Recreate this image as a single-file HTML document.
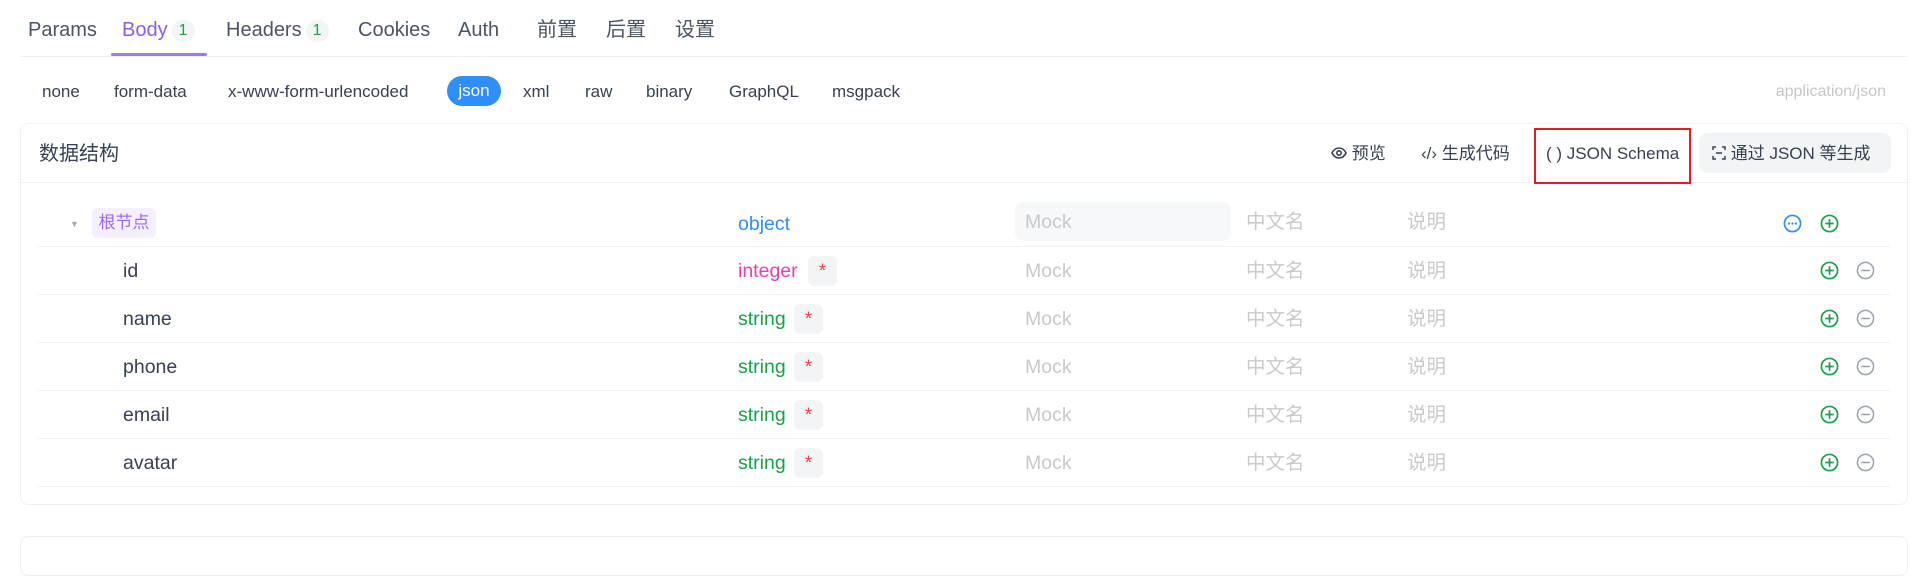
<!DOCTYPE html>
<html><head><meta charset="utf-8"><style>
*{box-sizing:border-box;margin:0;padding:0}
body{width:1930px;height:552px;background:#fff;font-family:"Liberation Sans","Noto Sans CJK SC",sans-serif;color:#4b5563;position:relative;overflow:hidden}
.a{position:absolute;white-space:nowrap;line-height:24px}
.tab{font-size:20px;top:18px;color:#4b5563}
.badge{display:inline-block;background:#f1f5f3;color:#16a34a;border-radius:11px;font-size:16px;padding:0 7px;margin-left:4px;line-height:22px;vertical-align:1px}
.bt{font-size:17px;top:80px;color:#374151}
.row{font-size:19.5px}
.mock{color:#c7c9cc}
.sep{position:absolute;left:37px;width:1853px;height:1px;background:#f0f1f3}
.star{display:inline-block;background:#f3f4f6;color:#ef4444;border-radius:6px;width:29px;text-align:center;height:30px;line-height:32px;vertical-align:middle;font-size:19px}
.hb{font-size:17px;top:142px;color:#374151}
</style></head><body>
<div class="a tab" style="left:28px">Params</div>
<div class="a tab" style="left:122px;color:#8b5cf6">Body<span class="badge">1</span></div>
<div class="a tab" style="left:226px">Headers<span class="badge">1</span></div>
<div class="a tab" style="left:358px">Cookies</div>
<div class="a tab" style="left:458px">Auth</div>
<div class="a tab" style="left:537px">前置</div>
<div class="a tab" style="left:606px">后置</div>
<div class="a tab" style="left:675px">设置</div>
<div class="a" style="left:20px;top:56px;width:1888px;height:1px;background:#eeeff1"></div>
<div class="a" style="left:111px;top:53px;width:96px;height:3px;background:#9b7be8;border-radius:2px"></div>

<div class="a bt" style="left:42px">none</div>
<div class="a bt" style="left:114px">form-data</div>
<div class="a bt" style="left:228px">x-www-form-urlencoded</div>
<div class="a" style="left:447px;top:76px;width:54px;height:30px;border-radius:15px;background:#2f8ef8;color:#fff;font-size:17px;text-align:center;line-height:30px">json</div>
<div class="a bt" style="left:523px">xml</div>
<div class="a bt" style="left:585px">raw</div>
<div class="a bt" style="left:646px">binary</div>
<div class="a bt" style="left:729px">GraphQL</div>
<div class="a bt" style="left:832px">msgpack</div>
<div class="a" style="right:44px;top:80px;font-size:16px;color:#c4c6ca">application/json</div>

<div class="a" style="left:20px;top:123px;width:1888px;height:382px;border:1px solid #eef0f2;border-radius:8px"></div>
<div class="a" style="left:39px;top:142px;font-size:20px;color:#374151">数据结构</div>
<div class="a" style="left:21px;top:182px;width:1886px;height:1px;background:#eef0f2"></div>
<div class="a hb" style="left:1331px"><svg width="16" height="12" viewBox="0 0 16 12" style="vertical-align:0"><path d="M1 6C3 2 6 1 8 1s5 1 7 5c-2 4-5 5-7 5S3 10 1 6z" fill="none" stroke="#374151" stroke-width="1.6"/><circle cx="8" cy="6" r="2.2" fill="none" stroke="#374151" stroke-width="1.6"/></svg> 预览</div>
<div class="a hb" style="left:1421px">‹/› 生成代码</div>
<div class="a hb" style="left:1546px">( ) JSON Schema</div>
<div class="a" style="left:1534px;top:128px;width:157px;height:56px;border:2px solid #e51c23"></div>
<div class="a" style="left:1699px;top:133px;width:192px;height:40px;background:#f3f4f5;border-radius:8px"></div>
<div class="a hb" style="left:1712px"><svg width="14" height="14" viewBox="0 0 14 14" style="vertical-align:-1px"><path d="M1 4V1h3M10 1h3v3M13 10v3h-3M4 13H1v-3M4 7h6" fill="none" stroke="#374151" stroke-width="1.5"/></svg> 通过 JSON 等生成</div>

<div class="a" style="left:70px;top:212px;font-size:9px;color:#aaa">▼</div>
<div class="a" style="left:92px;top:208px;width:64px;height:30px;border-radius:6px;background:#f5f0ff;color:#9b6cf0;font-size:17px;text-align:center;line-height:30px">根节点</div>
<div class="a row" style="left:738px;top:212px;color:#2f8ef8">object</div>
<div class="a" style="left:1015px;top:202px;width:216px;height:39px;background:#f7f8fa;border-radius:8px"></div>
<div class="a row mock" style="left:1025px;top:210px">Mock</div>
<div class="a row mock" style="left:1246px;top:210px">中文名</div>
<div class="a row mock" style="left:1407px;top:210px">说明</div>
<svg class="a" style="left:1783px;top:214px" width="19" height="19" viewBox="0 0 20 20"><circle cx="10" cy="10" r="8.5" fill="none" stroke="#2f8ef8" stroke-width="1.8"/><circle cx="6.5" cy="10" r="1.2" fill="#2f8ef8"/><circle cx="10" cy="10" r="1.2" fill="#2f8ef8"/><circle cx="13.5" cy="10" r="1.2" fill="#2f8ef8"/></svg>
<svg class="a" style="left:1820px;top:214px" width="19" height="19" viewBox="0 0 20 20"><circle cx="10" cy="10" r="8.5" fill="none" stroke="#16a34a" stroke-width="1.8"/><path d="M10 5.5v9M5.5 10h9" stroke="#16a34a" stroke-width="1.8"/></svg>
<div class="sep" style="top:246px"></div>

<div id="rows"></div>
<script>
var d=[["id","integer","#e83fb0",808],["name","string","#16a34a",794],["phone","string","#16a34a",794],["email","string","#16a34a",794],["avatar","string","#16a34a",794]];
var h="";
d.forEach(function(r,i){var t=259+i*48;
h+='<div class="a row" style="left:123px;top:'+t+'px;color:#374151">'+r[0]+'</div>';
h+='<div class="a row" style="left:738px;top:'+t+'px;color:'+r[2]+'">'+r[1]+'</div>';
h+='<div class="a" style="left:'+r[3]+'px;top:'+(t-3)+'px"><span class="star">*</span></div>';
h+='<div class="a row mock" style="left:1025px;top:'+t+'px">Mock</div>';
h+='<div class="a row mock" style="left:1246px;top:'+t+'px">中文名</div>';
h+='<div class="a row mock" style="left:1407px;top:'+t+'px">说明</div>';
h+='<svg class="a" style="left:1820px;top:'+(t+2)+'px" width="19" height="19" viewBox="0 0 20 20"><circle cx="10" cy="10" r="8.5" fill="none" stroke="#16a34a" stroke-width="1.8"/><path d="M10 5.5v9M5.5 10h9" stroke="#16a34a" stroke-width="1.8"/></svg>';
h+='<svg class="a" style="left:1856px;top:'+(t+2)+'px" width="19" height="19" viewBox="0 0 20 20"><circle cx="10" cy="10" r="8.5" fill="none" stroke="#9ca3af" stroke-width="1.6"/><path d="M5.5 10h9" stroke="#9ca3af" stroke-width="1.6"/></svg>';
h+='<div class="sep" style="top:'+(t+35)+'px"></div>';
});
document.getElementById("rows").innerHTML=h;
</script>
<div class="a" style="left:20px;top:536px;width:1888px;height:40px;border:1px solid #eef0f2;border-radius:8px"></div>
</body></html>
